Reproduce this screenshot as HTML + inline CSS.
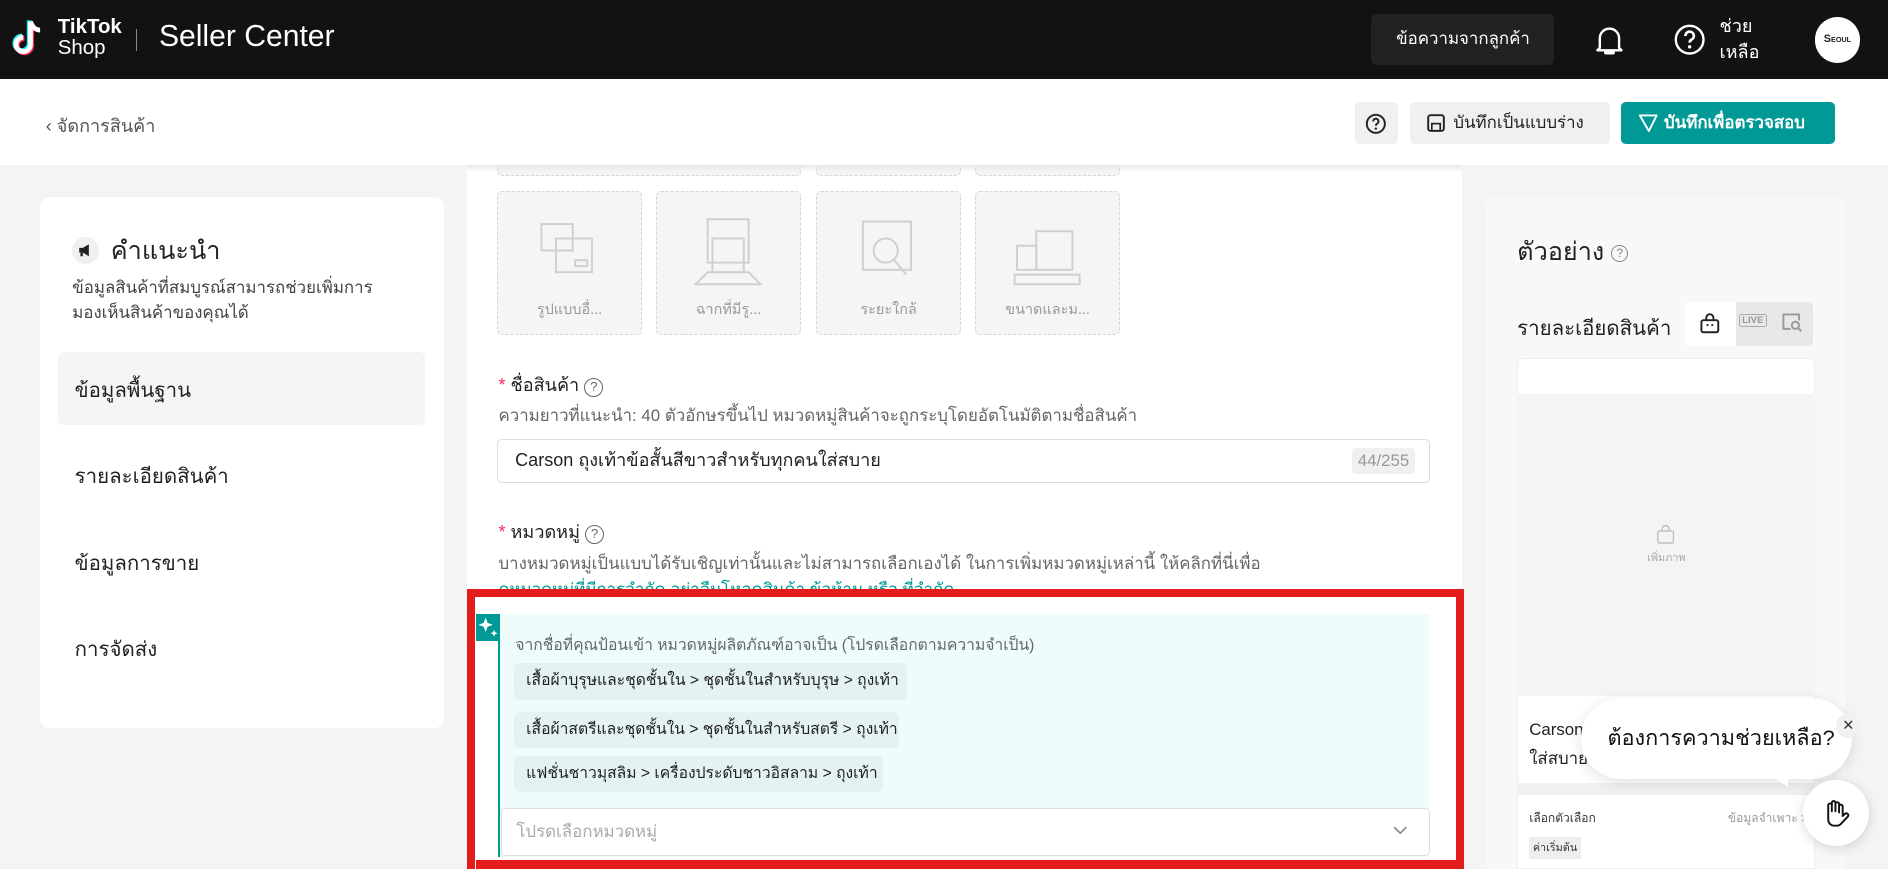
<!DOCTYPE html>
<html><head><meta charset="utf-8"><style>
*{box-sizing:border-box;margin:0;padding:0}
html,body{width:1888px;height:869px;overflow:hidden}
body{font-family:"Liberation Sans","Noto Sans CJK SC",sans-serif;background:#f4f4f4;position:relative}
#w{zoom:1.2041;width:1568px;height:722px;position:relative;overflow:hidden;font-family:"Liberation Sans","Noto Sans CJK SC",sans-serif}
.a{position:absolute}
.th{font-family:"Liberation Sans","Noto Sans CJK SC",sans-serif}
.hdr{left:0;top:0;width:1568px;height:66px;background:#121212}
.sub{left:0;top:66px;width:1568px;height:71px;background:#fff}
.tile{width:120px;height:119px;border:1px dashed #d6d6d6;border-radius:4px;background:#f5f5f5;text-align:center;color:#999;font-size:12px}
.chip{left:427px;height:30px;background:#e4f2f2;border-radius:5px;font-size:13px;color:#222;line-height:30px;padding:0 10px;white-space:nowrap}
.menu{left:62px;font-size:17px;color:#222}
</style></head><body><div id="w">
<div class="a" style="left:388px;top:137px;width:826px;height:585px;background:#fff"></div>
<div class="a tile" style="left:413px;top:110px;width:252px;height:36px"></div>
<div class="a tile" style="left:678px;top:110px;height:36px"></div>
<div class="a tile" style="left:810px;top:110px;height:36px"></div>
<div class="a" style="left:388px;top:137px;width:826px;height:6px;background:linear-gradient(rgba(230,230,230,.9),rgba(255,255,255,0))"></div>

<div class="a hdr">
 <svg class="a" style="left:8px;top:15px" width="30" height="34" viewBox="0 0 30 34"><path d="M17 3v19a6 6 0 1 1-6-6" fill="none" stroke="#25f4ee" stroke-width="4" transform="translate(-1,-1)"/><path d="M17 3v19a6 6 0 1 1-6-6" fill="none" stroke="#fe2c55" stroke-width="4" transform="translate(1,1)"/><path d="M17 3v19a6 6 0 1 1-6-6M17 3c1 4 4 7 8 7" fill="none" stroke="#fff" stroke-width="4"/></svg>
 <div class="a" style="left:48px;top:14px;color:#fff;font-weight:bold;font-size:17px;line-height:17px">TikTok</div>
 <div class="a" style="left:48px;top:31px;color:#fff;font-size:17px;line-height:18px">Shop</div>
 <div class="a" style="left:113px;top:24px;width:1px;height:18px;background:#888"></div>
 <div class="a" style="left:132px;top:17px;color:#fff;font-size:25px">Seller Center</div>
 <div class="a th" style="left:1139px;top:12px;width:152px;height:42px;background:#222;border-radius:5px;color:#fff;font-size:14px;line-height:42px;text-align:center">ข้อความจากลูกค้า</div>
 <svg class="a" style="left:1325px;top:21px" width="24" height="26" viewBox="0 0 24 26"><path d="M4 19V11a8 8 0 0 1 16 0v8l2 2H2z" fill="none" stroke="#fff" stroke-width="2" stroke-linejoin="round"/><path d="M9 23h6" stroke="#fff" stroke-width="3" stroke-linecap="round"/></svg>
 <svg class="a" style="left:1390px;top:20px" width="26" height="26" viewBox="0 0 26 26"><circle cx="13" cy="13" r="11.5" fill="none" stroke="#fff" stroke-width="2"/><path d="M9.5 10a3.5 3.5 0 1 1 5 3c-1 .6-1.5 1.2-1.5 2.5" fill="none" stroke="#fff" stroke-width="2.2"/><circle cx="13" cy="19" r="1.4" fill="#fff"/></svg>
 <div class="a th" style="left:1428px;top:12px;color:#fff;font-size:15px;line-height:21px">ช่วย<br>เหลือ</div>
 <div class="a" style="left:1507px;top:14px;width:38px;height:38px;border-radius:50%;background:#fff;color:#222;font-size:9px;font-weight:bold;line-height:38px;text-align:center">S<span style="font-size:6px">EOUL</span></div>
</div>
<div class="a sub">
 <div class="a th" style="left:38px;top:26px;color:#555;font-size:15px">‹ จัดการสินค้า</div>
 <div class="a" style="left:1125px;top:19px;width:36px;height:35px;background:#f0f0f0;border-radius:4px"><svg style="margin:9px" width="18" height="18" viewBox="0 0 18 18"><circle cx="9" cy="9" r="7.5" fill="none" stroke="#222" stroke-width="1.6"/><path d="M6.8 7a2.2 2.2 0 1 1 3 2c-.6.4-.8.8-.8 1.6" fill="none" stroke="#222" stroke-width="1.6"/><circle cx="9" cy="13" r="1" fill="#222"/></svg></div>
 <div class="a th" style="left:1171px;top:19px;width:166px;height:35px;background:#f0f0f0;border-radius:4px;font-size:14px;line-height:35px;color:#222;padding-left:36px">บันทึกเป็นแบบร่าง</div>
 <svg class="a" style="left:1185px;top:29px" width="15" height="15" viewBox="0 0 15 15"><rect x="1" y="1" width="13" height="13" rx="2" fill="none" stroke="#222" stroke-width="1.6"/><rect x="4" y="8" width="7" height="6" fill="none" stroke="#222" stroke-width="1.4"/></svg>
 <div class="a th" style="left:1346px;top:19px;width:178px;height:35px;background:#009995;border-radius:4px;font-size:14px;line-height:35px;color:#fff;padding-left:36px;font-weight:bold">บันทึกเพื่อตรวจสอบ</div>
 <svg class="a" style="left:1360px;top:28px" width="17" height="17" viewBox="0 0 17 17"><path d="M1.5 2h14l-6.5 13z" fill="none" stroke="#fff" stroke-width="1.6" stroke-linejoin="round"/></svg>
</div>

<!-- left card -->
<div class="a" style="left:33px;top:164px;width:336px;height:441px;background:#fff;border-radius:8px"></div>
<div class="a" style="left:60px;top:197px;width:22px;height:22px;border-radius:50%;background:#f0f0f0"><svg width="22" height="22" viewBox="0 0 22 22"><path d="M6 9h3l5-3v10l-5-3H6z" fill="#222"/><rect x="7" y="13" width="2" height="3" fill="#222"/></svg></div>
<div class="a th" style="left:92px;top:192px;font-size:21px;color:#222">คำแนะนำ</div>
<div class="a th" style="left:60px;top:228px;font-size:14px;color:#444;line-height:21px">ข้อมูลสินค้าที่สมบูรณ์สามารถช่วยเพิ่มการ<br>มองเห็นสินค้าของคุณได้</div>
<div class="a" style="left:48px;top:292px;width:305px;height:61px;background:#f5f5f5;border-radius:5px"></div>
<div class="a th menu" style="top:311px">ข้อมูลพื้นฐาน</div>
<div class="a th menu" style="top:382px">รายละเอียดสินค้า</div>
<div class="a th menu" style="top:454px">ข้อมูลการขาย</div>
<div class="a th menu" style="top:526px">การจัดส่ง</div>

<!-- middle -->
<div class="a tile th" style="left:413px;top:159px"><svg width="70" height="70" viewBox="0 0 70 70" style="margin-top:16px"><g fill="none" stroke="#cfcfcf" stroke-width="1.6"><rect x="12" y="10" width="26" height="22"/><rect x="24" y="22" width="30" height="28"/><rect x="40" y="40" width="10" height="5"/></g></svg><div style="margin-top:-2px">รูปแบบอื่...</div></div>
<div class="a tile th" style="left:545px;top:159px"><svg width="70" height="70" viewBox="0 0 70 70" style="margin-top:16px"><g fill="none" stroke="#cfcfcf" stroke-width="1.6"><rect x="18" y="6" width="34" height="36"/><rect x="22" y="22" width="26" height="28"/><path d="M8 60l10-10h34l10 10z"/></g></svg><div style="margin-top:-2px">ฉากที่มีรู...</div></div>
<div class="a tile th" style="left:678px;top:159px"><svg width="70" height="70" viewBox="0 0 70 70" style="margin-top:16px"><g fill="none" stroke="#cfcfcf" stroke-width="1.6"><rect x="14" y="8" width="40" height="40"/><circle cx="33" cy="32" r="10"/><path d="M40 40l10 12"/></g></svg><div style="margin-top:-2px">ระยะใกล้</div></div>
<div class="a tile th" style="left:810px;top:159px"><svg width="70" height="70" viewBox="0 0 70 70" style="margin-top:16px"><g fill="none" stroke="#cfcfcf" stroke-width="1.6"><rect x="10" y="28" width="16" height="20"/><rect x="26" y="16" width="30" height="32"/><rect x="8" y="52" width="54" height="8"/></g></svg><div style="margin-top:-2px">ขนาดและม...</div></div>

<div class="a th" style="left:414px;top:307px;font-size:15px;color:#222"><span style="color:#fe2c55">*</span> ชื่อสินค้า <span style="display:inline-block;width:16px;height:16px;border:1.3px solid #666;border-radius:50%;font-size:11px;text-align:center;line-height:14px;color:#666">?</span></div>
<div class="a th" style="left:414px;top:335px;font-size:14px;color:#666">ความยาวที่แนะนำ: 40 ตัวอักษรขึ้นไป หมวดหมู่สินค้าจะถูกระบุโดยอัตโนมัติตามชื่อสินค้า</div>
<div class="a th" style="left:413px;top:365px;width:775px;height:36px;border:1px solid #ddd;border-radius:4px;font-size:15px;color:#222;line-height:34px;padding-left:14px">Carson ถุงเท้าข้อสั้นสีขาวสำหรับทุกคนใส่สบาย</div>
<div class="a" style="left:1123px;top:372px;width:52px;height:22px;background:#f0f0f0;border-radius:3px;color:#999;font-size:14px;line-height:22px;text-align:center">44/255</div>
<div class="a th" style="left:414px;top:429px;font-size:15px;color:#222"><span style="color:#fe2c55">*</span> หมวดหมู่ <span style="display:inline-block;width:16px;height:16px;border:1.3px solid #666;border-radius:50%;font-size:11px;text-align:center;line-height:14px;color:#666">?</span></div>
<div class="a th" style="left:414px;top:458px;font-size:14px;color:#666">บางหมวดหมู่เป็นแบบได้รับเชิญเท่านั้นและไม่สามารถเลือกเองได้ ในการเพิ่มหมวดหมู่เหล่านี้ ให้คลิกที่นี่เพื่อ</div>
<div class="a th" style="left:414px;top:480px;font-size:14px;color:#009995;height:10px;overflow:hidden;line-height:20px">ดูหมวดหมู่ที่มีการจำกัด อย่าลืมโหลดสินค้า ข้อห้าม หรือ ที่จำกัด</div>

<!-- red box -->
<div class="a" style="left:388px;top:489px;width:828px;height:233px;border:7px solid #e51c1c;border-bottom:none"></div>
<div class="a" style="left:395px;top:714px;width:814px;height:8px;background:#e51c1c"></div>
<div class="a" style="left:414px;top:510px;width:773px;height:202px;background:#effcfc;border-left:2px solid #009995"></div>
<div class="a" style="left:395px;top:510px;width:20px;height:22px;background:#009995"><svg width="20" height="22" viewBox="0 0 20 22"><path d="M8 3l1.6 4.4L14 9l-4.4 1.6L8 15l-1.6-4.4L2 9l4.4-1.6z" fill="#fff"/><path d="M15 13l.8 2.2L18 16l-2.2.8L15 19l-.8-2.2L12 16l2.2-.8z" fill="#fff"/></svg></div>
<div class="a th" style="left:428px;top:525px;font-size:13px;color:#666">จากชื่อที่คุณป้อนเข้า หมวดหมู่ผลิตภัณฑ์อาจเป็น (โปรดเลือกตามความจำเป็น)</div>
<div class="a chip th" style="top:551px;width:326px">เสื้อผ้าบุรุษและชุดชั้นใน &gt; ชุดชั้นในสำหรับบุรุษ &gt; ถุงเท้า</div>
<div class="a chip th" style="top:591px;width:320px">เสื้อผ้าสตรีและชุดชั้นใน &gt; ชุดชั้นในสำหรับสตรี &gt; ถุงเท้า</div>
<div class="a chip th" style="top:628px;width:306px">แฟชั่นชาวมุสลิม &gt; เครื่องประดับชาวอิสลาม &gt; ถุงเท้า</div>
<div class="a th" style="left:416px;top:671px;width:772px;height:40px;background:#fff;border:1px solid #ddd;border-radius:4px;font-size:14px;color:#aaa;line-height:38px;padding-left:12px">โปรดเลือกหมวดหมู่</div>
<svg class="a" style="left:1157px;top:686px" width="12" height="8" viewBox="0 0 12 8"><path d="M1 1l5 5 5-5" fill="none" stroke="#888" stroke-width="1.4"/></svg>

<!-- right -->
<div class="a" style="left:1234px;top:164px;width:298px;height:560px;background:#f8f8f8;border-radius:8px"></div>
<div class="a th" style="left:1260px;top:193px;font-size:21px;color:#222">ตัวอย่าง <span style="display:inline-block;width:14px;height:14px;border:1.2px solid #888;border-radius:50%;font-size:10px;text-align:center;line-height:12px;color:#888;vertical-align:middle">?</span></div>
<div class="a th" style="left:1260px;top:259px;font-size:17px;color:#222">รายละเอียดสินค้า</div>
<div class="a" style="left:1399px;top:251px;width:107px;height:36px;background:#e8e8e8;border-radius:4px"></div>
<div class="a" style="left:1399px;top:251px;width:43px;height:36px;background:#fff;border-radius:4px 0 0 4px"><svg style="margin:9px 12px" width="18" height="18" viewBox="0 0 18 18"><rect x="2" y="6" width="14" height="10" rx="1.5" fill="none" stroke="#222" stroke-width="1.6"/><path d="M6 6V4a3 3 0 0 1 6 0v2" fill="none" stroke="#222" stroke-width="1.6"/><circle cx="7" cy="10" r=".9" fill="#222"/><circle cx="11" cy="10" r=".9" fill="#222"/></svg></div>
<div class="a" style="left:1444px;top:261px;font-size:8px;color:#999;font-weight:bold;border:1px solid #aaa;border-radius:2px;padding:0 2px">LIVE</div>
<svg class="a" style="left:1479px;top:259px" width="18" height="17" viewBox="0 0 18 17"><path d="M15 7V2H2v12h6" fill="none" stroke="#999" stroke-width="1.6"/><circle cx="12" cy="11" r="3" fill="none" stroke="#999" stroke-width="1.6"/><path d="M14 13l3 3" stroke="#999" stroke-width="1.6"/></svg>
<div class="a" style="left:1260px;top:297px;width:247px;height:425px;background:#fff;border-radius:5px 5px 0 0;border:1px solid #eee"></div>
<div class="a" style="left:1260px;top:327px;width:247px;height:251px;background:#f4f4f4"></div>
<svg class="a" style="left:1375px;top:436px" width="16" height="16" viewBox="0 0 16 16"><rect x="1.5" y="5" width="13" height="10" rx="1.5" fill="none" stroke="#bbb" stroke-width="1.1"/><path d="M5 5V3.5a3 3 0 0 1 6 0V5" fill="none" stroke="#bbb" stroke-width="1.1"/></svg>
<div class="a th" style="left:1368px;top:456px;font-size:9px;color:#aaa">เพิ่มภาพ</div>
<div class="a th" style="left:1270px;top:595px;font-size:14px;color:#222;line-height:24px">Carson<br>ใส่สบาย</div>
<div class="a" style="left:1260px;top:650px;width:247px;height:10px;background:#f0f0f0"></div>
<div class="a th" style="left:1270px;top:672px;font-size:10px;color:#333">เลือกตัวเลือก</div>
<div class="a th" style="left:1435px;top:672px;font-size:10px;color:#999">ข้อมูลจำเพาะ &gt;</div>
<div class="a th" style="left:1270px;top:695px;font-size:9px;color:#333;background:#eee;padding:2px 3px">ค่าเริ่มต้น</div>

<div class="a th" style="left:1313px;top:580px;width:225px;height:67px;background:#fff;border-radius:34px;box-shadow:0 3px 12px rgba(0,0,0,.12);font-size:18px;color:#111;line-height:67px;padding-left:22px">ต้องการความช่วยเหลือ?</div>
<div class="a" style="left:1465px;top:640px;width:0;height:0;border-left:20px solid transparent;border-top:14px solid #fff"></div>
<div class="a" style="left:1525px;top:593px;width:20px;height:20px;border-radius:50%;background:#f0f0f0;font-size:12px;line-height:20px;text-align:center;color:#333">✕</div>
<div class="a" style="left:1497px;top:648px;width:55px;height:55px;border-radius:50%;background:#fff;box-shadow:0 2px 10px rgba(0,0,0,.15)"><svg style="margin:15px" width="25" height="25" viewBox="0 0 25 25"><path d="M6 13V6a1.5 1.5 0 0 1 3 0v5V4a1.5 1.5 0 0 1 3 0v7V5a1.5 1.5 0 0 1 3 0v7V7a1.5 1.5 0 0 1 3 0v8l2-2a1.7 1.7 0 0 1 2.4 2.3L17 21a5 5 0 0 1-4 2h-2a5 5 0 0 1-5-5z" fill="none" stroke="#111" stroke-width="1.6" stroke-linejoin="round"/></svg></div>
</div></body></html>
